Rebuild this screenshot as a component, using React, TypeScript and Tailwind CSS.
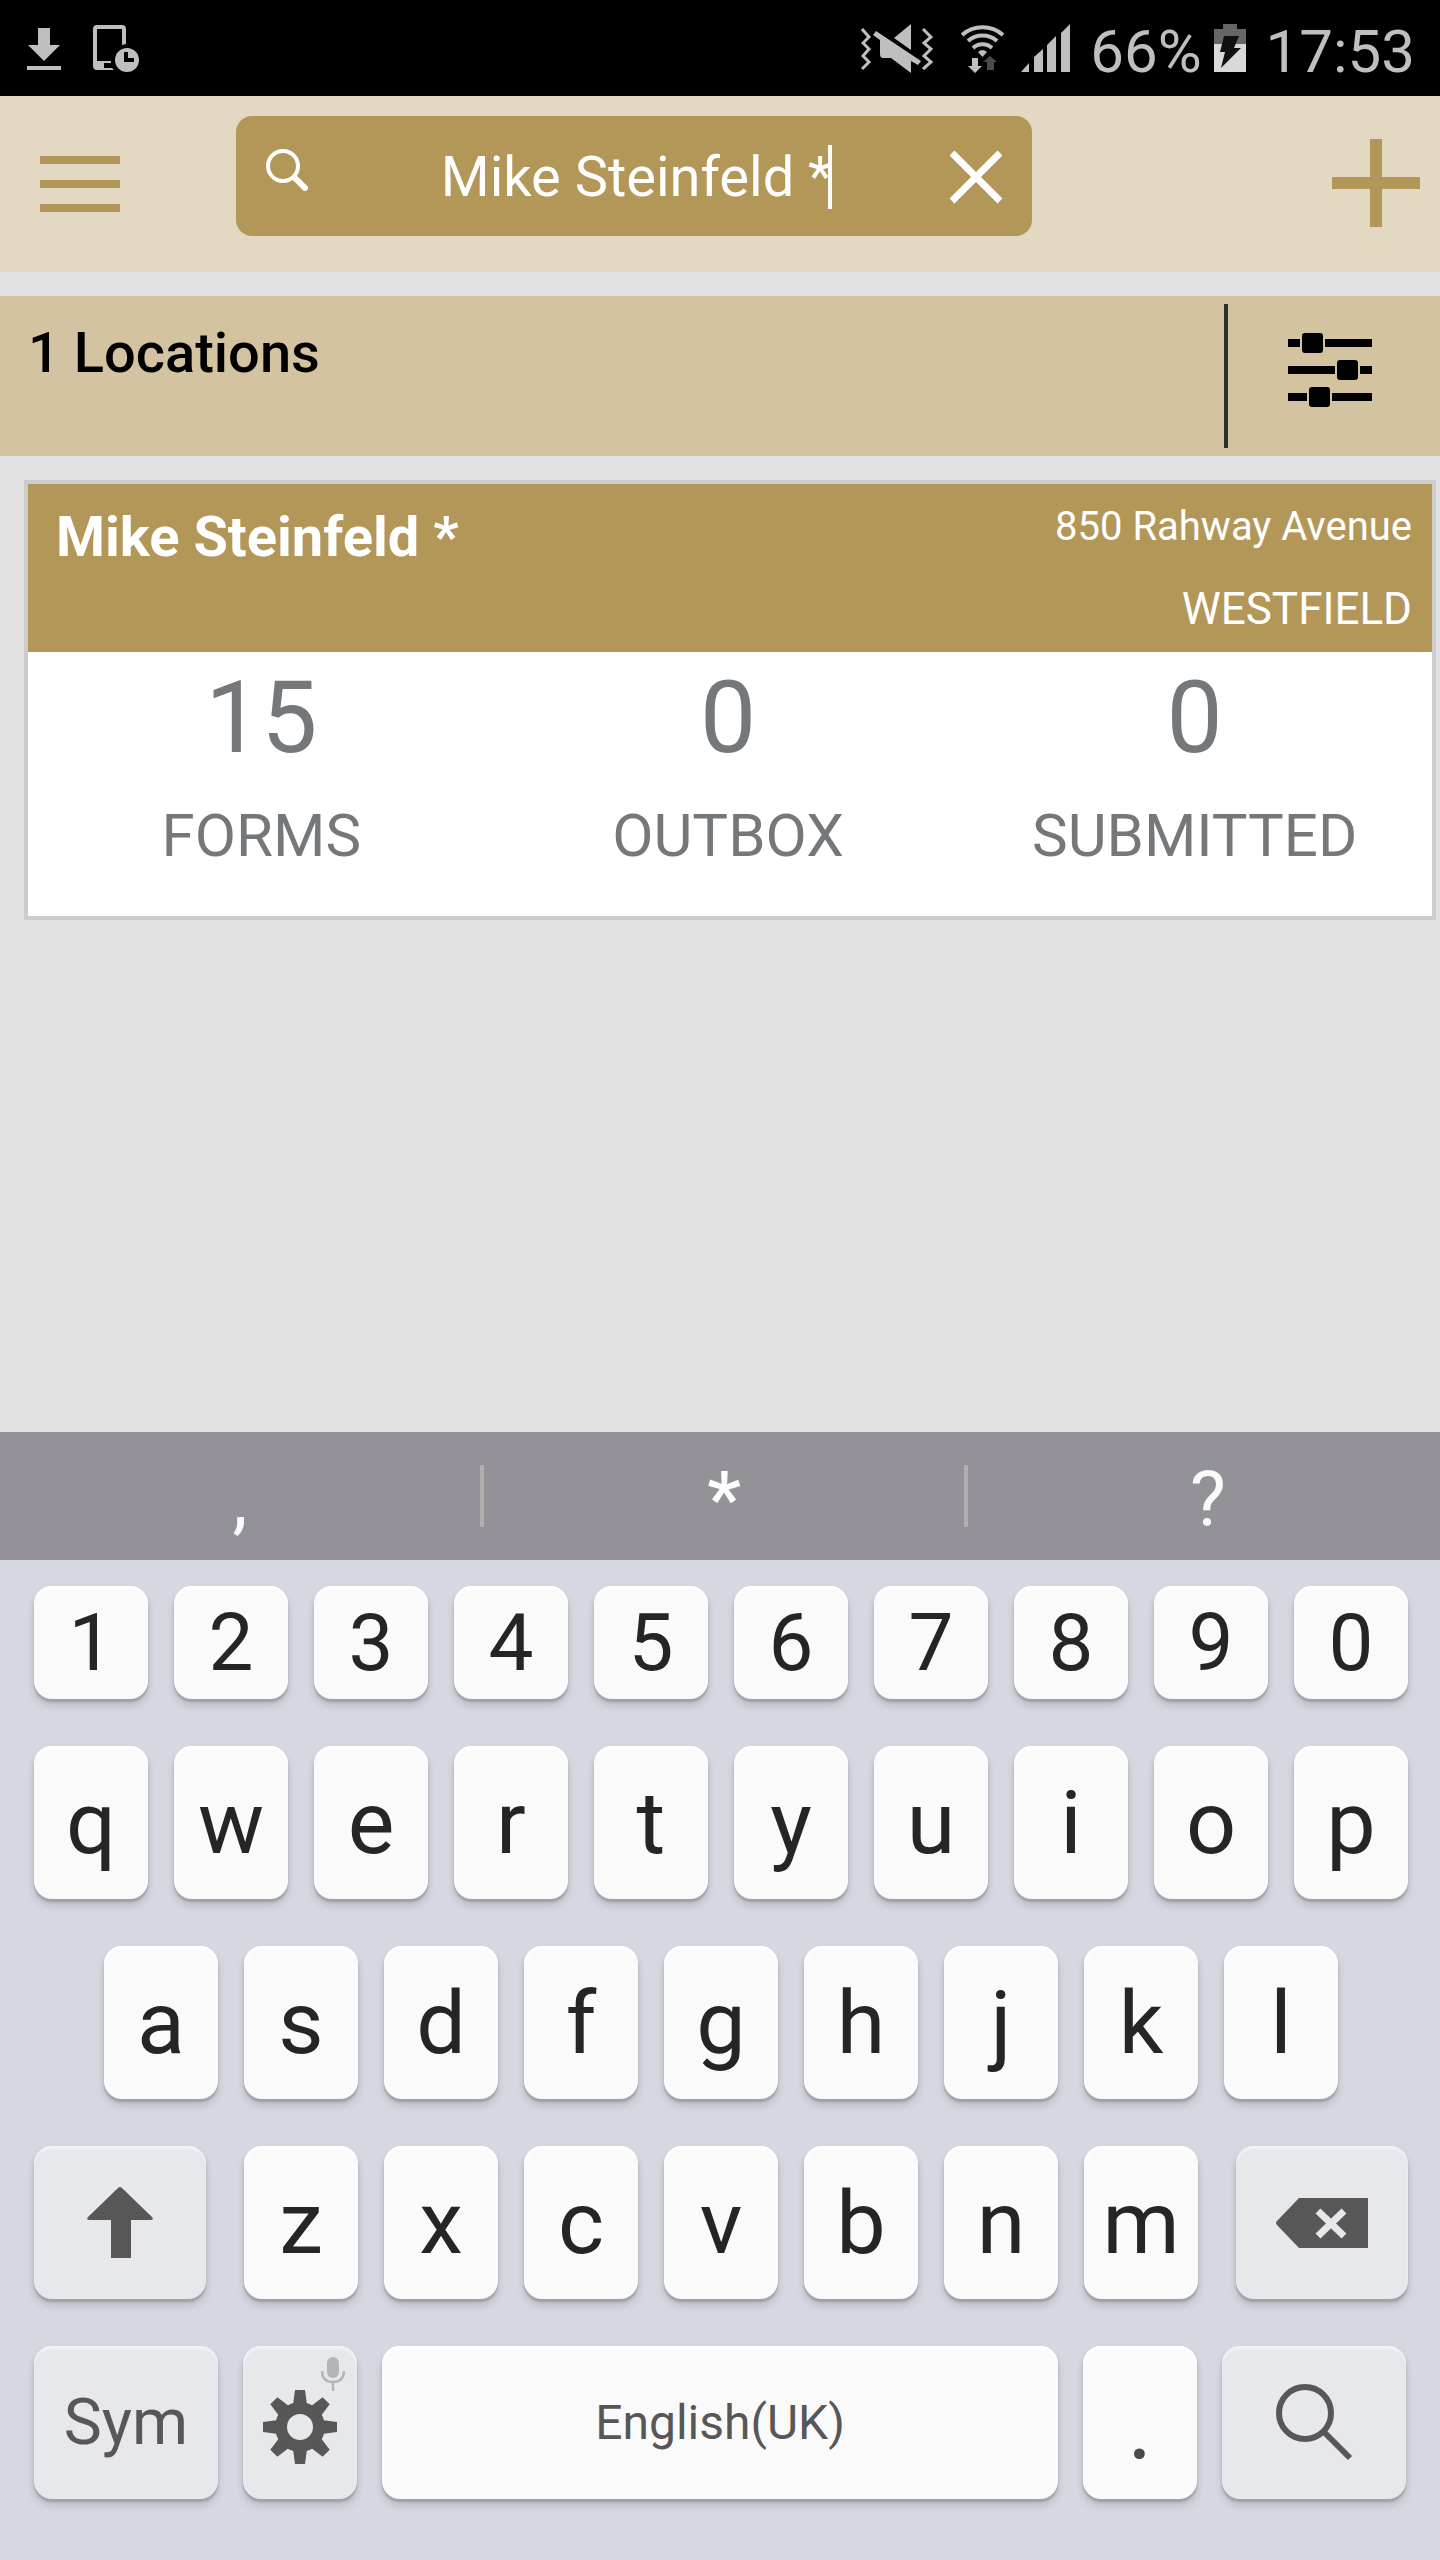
import type { ReactNode } from "react";

const digits = ["1", "2", "3", "4", "5", "6", "7", "8", "9", "0"];
const topRow = ["q", "w", "e", "r", "t", "y", "u", "i", "o", "p"];
const homeRow = ["a", "s", "d", "f", "g", "h", "j", "k", "l"];
const bottomRow = ["z", "x", "c", "v", "b", "n", "m"];

const stats = [
  { value: "15", label: "FORMS" },
  { value: "0", label: "OUTBOX" },
  { value: "0", label: "SUBMITTED" },
];

const keyBase =
  "relative flex items-center justify-center rounded-[18px] shadow-[0_3px_2px_#9fa1a7,0_6px_8px_#00000026,inset_0_3px_2px_#ffffff]";
const specialBase =
  "relative flex items-center justify-center rounded-[18px] bg-[#e6e8ec] text-[#575757] shadow-[0_3px_2px_#9fa1a7,0_6px_8px_#00000026,inset_0_3px_2px_#f1f2f4]";

function Key({ children, className }: { children: ReactNode; className: string }) {
  return (
    <button type="button" className={`${keyBase} min-w-0 flex-1 bg-[#fafafa] text-[#252525] ${className}`}>
      {children}
    </button>
  );
}

function StatusBar() {
  return (
    <div className="flex h-24 items-center bg-black pl-[27px] pr-[25px] text-[60px] leading-[72px] text-[#bfbfbf]">
      <svg className="h-[48px] w-[34px]" viewBox="0 0 34 48" fill="currentColor" aria-label="Download">
        <path d="M11 4h12v17h10L17 37 1 21h10zM0 42h34v4H0z" />
      </svg>
      <svg className="ml-8 h-[48px] w-[48px]" viewBox="0 0 48 48" aria-label="Device timer">
        <path
          fill="currentColor"
          fillRule="evenodd"
          d="M4 1h25q4 0 4 4v15l-4 1V5H4v32h14v2h-7v5h8l2 2H4q-4 0-4-4V5q0-4 4-4z"
        />
        <circle cx="34" cy="36" r="12" fill="currentColor" />
        <path d="M31 28h4v6h6v4H31z" fill="#000" />
      </svg>
      <div className="ml-auto flex items-center">
        <svg className="h-[50px] w-[72px]" viewBox="0 0 72 50" aria-label="Vibrate">
          <path
            d="M1 6l7 8-6 6 6 6-6 7 6 6-7 7M62 6l8 8-7 6 7 6-7 7 7 6-8 7"
            fill="none"
            stroke="currentColor"
            strokeWidth="3"
          />
          <path d="M50 1v26L33 15z" fill="currentColor" />
          <path d="M15 8l45 30-3 4-7-4v12L30 35h-8q-3 0-3-4V17l-7-5z" fill="currentColor" />
        </svg>
        <svg className="ml-7 h-[50px] w-[44px]" viewBox="0 0 44 50" aria-label="Wi-Fi">
          <g fill="none" stroke="currentColor" strokeWidth="4">
            <path d="M1 12A31 31 0 0 1 42 12" />
            <path d="M7 18A22 22 0 0 1 36 18" />
            <path d="M12 25A14 14 0 0 1 31 25" />
          </g>
          <path d="M17 29q4.500-4 9 0l-4.500 5z" fill="currentColor" />
          <path d="M11 35h6v8h4l-7 7-7-7h4z" fill="currentColor" />
          <path d="M26 47h7v-8h3l-7-6-7 6h4z" fill="#4b4b4b" />
        </svg>
        <svg className="ml-4 h-[48px] w-[49px]" viewBox="0 0 49 48" fill="currentColor" aria-label="Signal">
          <path d="M0 48l8-9v9zM13 33l9-8v23h-9zM26 21l9-9v36h-9zM40 9l9-9v48h-9z" />
        </svg>
        <span className="ml-5 pt-2">66%</span>
        <svg className="ml-3 h-[48px] w-[32px]" viewBox="0 0 32 48" aria-label="Battery charging">
          <path d="M9 0h14v5h9v15H0V5h9z" fill="#666" />
          <path d="M0 20h32v28H0z" fill="#d9d9d9" />
          <path d="M10 12h15l-5 12h7L7 44l4-16H6z" fill="#111" />
        </svg>
        <span className="ml-5 pt-2">17:53</span>
      </div>
    </div>
  );
}

function Header() {
  return (
    <header className="flex h-44 items-start bg-[#e3d8c1] pl-10 pr-5 pt-5">
      <button type="button" aria-label="Menu" className="mt-10 flex w-20 flex-col gap-4">
        <span className="h-2 w-full bg-[#b39759]" />
        <span className="h-2 w-full bg-[#b39759]" />
        <span className="h-2 w-full bg-[#b39759]" />
      </button>
      <div className="ml-[116px] mr-[300px] flex h-[120px] min-w-0 flex-1 items-center rounded-2xl bg-[#b39759] pl-[30px] pr-[29px] pt-0.5 text-white">
        <svg className="mb-3.5 h-[42px] w-[42px] shrink-0" viewBox="0 0 42 42" fill="none" stroke="currentColor" aria-hidden="true">
          <circle cx="17" cy="17" r="15" strokeWidth="4" />
          <path d="M27 27l14 14" strokeWidth="6" />
        </svg>
        <div className="flex min-w-0 flex-1 items-center justify-center pl-4">
          <input
            type="text"
            aria-label="Search locations"
            defaultValue="Mike Steinfeld *"
            className="max-w-full bg-transparent text-[56px] leading-[64px] text-white outline-none [field-sizing:content]"
          />
          <span className="-ml-1 h-16 w-1 shrink-0 bg-white" />
        </div>
        <button type="button" aria-label="Clear" className="shrink-0">
          <svg className="h-[54px] w-[54px]" viewBox="0 0 54 54" fill="none" stroke="currentColor" strokeWidth="7">
            <path d="M3 3l48 48M51 3L3 51" />
          </svg>
        </button>
      </div>
      <button type="button" aria-label="Add location" className="mt-[23px] shrink-0">
        <svg className="h-[88px] w-[88px]" viewBox="0 0 88 88" fill="#b39759">
          <path d="M38 0h12v38h38v12H50v38H38V50H0V38h38z" />
        </svg>
      </button>
    </header>
  );
}

function LocationsBar() {
  return (
    <div className="mt-6 flex h-40 bg-[#d3c3a1] py-2 pl-7">
      <h1 className="flex-1 pt-[17px] text-[56px] font-medium leading-[64px] text-black">1 Locations</h1>
      <button
        type="button"
        aria-label="Filter"
        className="flex w-[216px] items-start border-l-4 border-[#2f2f2f] pl-[60px] pt-7"
      >
        <svg className="h-[76px] w-[84px]" viewBox="0 0 84 76" fill="#000">
          <path d="M0 7h12v8H0zM37 7h47v8H37zM0 34h47v8H0zM72 34h12v8H72zM0 61h19v8H0zM44 61h40v8H44z" />
          <rect x="14" y="1" width="21" height="20" rx="3" />
          <rect x="49" y="28" width="21" height="20" rx="3" />
          <rect x="21" y="55" width="21" height="20" rx="3" />
        </svg>
      </button>
    </div>
  );
}

function LocationCard() {
  return (
    <section className="ml-6 mr-1 mt-6 border-4 border-[#cccccc] bg-white">
      <div className="flex justify-between bg-[#b39759] pl-7 pr-5 text-white">
        <h2 className="pt-[21px] text-[56px] font-bold leading-[64px]">Mike Steinfeld *</h2>
        <div className="pb-0.5 pt-0.5 text-right">
          <p className="text-[40px] leading-[82px]">850 Rahway Avenue</p>
          <p className="text-[44px] leading-[82px]">WESTFIELD</p>
        </div>
      </div>
      <div className="grid grid-cols-3 pb-7 pr-1 text-center text-[#75787b]">
        {stats.map((s) => (
          <div key={s.label}>
            <div className="text-[100px] leading-[132px]">{s.value}</div>
            <div className="text-[60px] leading-[104px]">{s.label}</div>
          </div>
        ))}
      </div>
    </section>
  );
}

function Suggestions() {
  return (
    <div className="flex h-32 items-center bg-[#949298] text-[76px] leading-[96px] text-[#fafafa]">
      <button type="button" className="w-1/3 shrink-0 pt-1.5">
        ,
      </button>
      <span className="h-[62px] w-1 shrink-0 bg-[#b0afae]" />
      <button type="button" className="w-1/3 shrink-0 pt-1.5 font-medium text-white">
        *
      </button>
      <span className="h-[62px] w-1 shrink-0 bg-[#b0afae]" />
      <button type="button" className="min-w-0 flex-1 pl-2 pt-1.5">
        ?
      </button>
    </div>
  );
}

function Keyboard() {
  return (
    <div className="flex flex-col gap-[47px] bg-[#d5d8e1] pb-[61px] pl-[34px] pr-8 pt-[26px] leading-none">
      <div className="flex h-[113px] gap-[26px]">
        {digits.map((d) => (
          <Key key={d} className="text-[80px]">
            {d}
          </Key>
        ))}
      </div>
      <div className="flex h-[153px] gap-[26px]">
        {topRow.map((k) => (
          <Key key={k} className="text-[88px]">
            {k}
          </Key>
        ))}
      </div>
      <div className="flex h-[153px] gap-[26px] px-[70px]">
        {homeRow.map((k) => (
          <Key key={k} className="text-[88px]">
            {k}
          </Key>
        ))}
      </div>
      <div className="flex h-[153px] gap-[38px]">
        <button type="button" aria-label="Shift" className={`${specialBase} w-[172px] shrink-0`}>
          <svg className="h-[72px] w-[66px]" viewBox="0 0 66 72" fill="currentColor">
            <path d="M31 1q2-2 4 0l30 29q2 3-1 3H44v38H24V33H2q-3 0-1-3z" />
          </svg>
        </button>
        <div className="flex min-w-0 flex-1 gap-[26px]">
          {bottomRow.map((k) => (
            <Key key={k} className="text-[88px]">
              {k}
            </Key>
          ))}
        </div>
        <button type="button" aria-label="Backspace" className={`${specialBase} w-[172px] shrink-0`}>
          <svg className="h-[50px] w-[92px]" viewBox="0 0 92 50">
            <path d="M23 0h69v50H23L1 27q-2-2 0-4z" fill="currentColor" />
            <path d="M42 13l26 25M68 13L42 38" stroke="#e6e8ec" strokeWidth="7" />
          </svg>
        </button>
      </div>
      <div className="flex h-[153px] gap-[25px] pr-0.5">
        <button type="button" className={`${specialBase} w-[184px] shrink-0 text-[64px]`}>
          Sym
        </button>
        <button type="button" aria-label="Settings and voice input" className={`${specialBase} w-[114px] shrink-0 pt-2`}>
          <svg className="h-[74px] w-[74px]" viewBox="-37 -37 74 74" fill="currentColor">
            <path
              fillRule="evenodd"
              d="M0-25A25 25 0 1 0 0 25A25 25 0 1 0 0-25zM0-13A13 13 0 1 1 0 13A13 13 0 1 1 0-13z"
            />
            {[0, 45, 90, 135, 180, 225, 270, 315].map((a) => (
              <path key={a} d="M-5-37H5L7-22H-7z" transform={`rotate(${a})`} />
            ))}
          </svg>
          <svg className="absolute right-3 top-[11px] h-[34px] w-6 text-[#b4b5b9]" viewBox="0 0 24 34">
            <rect x="6" y="0" width="12" height="21" rx="6" fill="currentColor" />
            <path d="M1 14q0 11 11 11t11-11M12 25v9" fill="none" stroke="currentColor" strokeWidth="2.500" />
          </svg>
        </button>
        <button type="button" className={`${keyBase} min-w-0 flex-1 bg-[#fafafa] text-[48px] text-[#575757]`}>
          English(UK)
        </button>
        <button type="button" className={`${keyBase} w-[114px] shrink-0 bg-[#fafafa] pt-1 text-[96px] text-[#4a4a4a]`}>
          .
        </button>
        <button type="button" aria-label="Search" className={`${specialBase} w-[184px] shrink-0`}>
          <svg className="h-[77px] w-[77px]" viewBox="0 0 77 77" fill="none" stroke="currentColor">
            <circle cx="29" cy="29" r="26" strokeWidth="6" />
            <path d="M47 47l27 27" strokeWidth="6" />
          </svg>
        </button>
      </div>
    </div>
  );
}

export default function App() {
  return (
    <div className="flex min-h-screen flex-col bg-[#e1e1e1] font-['Roboto',sans-serif]">
      <StatusBar />
      <Header />
      <main className="flex-1">
        <LocationsBar />
        <LocationCard />
      </main>
      <Suggestions />
      <Keyboard />
    </div>
  );
}
